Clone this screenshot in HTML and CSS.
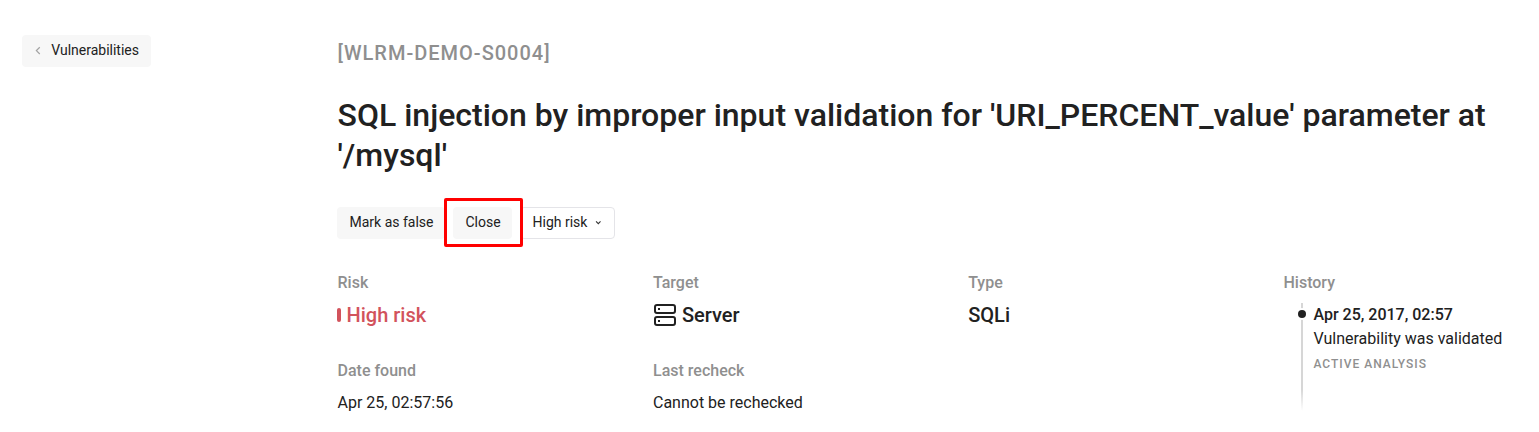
FILE: index.html
```html
<!DOCTYPE html>
<html lang="en">
<head>
<meta charset="utf-8">
<title>Vulnerability</title>
<link rel="stylesheet" href="styles.css">
</head>
<body>
<div class="page">
  <aside class="side">
    <a class="btn back"><svg width="8" height="10" viewBox="0 0 8 10"><path d="M6 2.1 2.5 5.6 6 9.1" fill="none" stroke="#a3a3a3" stroke-width="1.3"/></svg>Vulnerabilities</a>
  </aside>
  <main class="main">
    <div class="code">[WLRM-DEMO-S0004]</div>
    <h1 class="title">SQL injection by improper input validation for 'URI_PERCENT_value' parameter at '/mysql'</h1>
    <div class="actions">
      <a class="btn mark">Mark as false</a>
      <div class="close-wrap"><a class="btn close">Close</a><span class="highlight"></span></div>
      <a class="btn select">High risk<svg width="8" height="6" viewBox="0 0 8 6"><path d="M1.3 2.3 4 5l2.7-2.7" fill="none" stroke="#333" stroke-width="1.3"/></svg></a>
    </div>
    <div class="grid">
      <section class="cell"><div class="label">Risk</div><div class="value risk"><i class="bar"></i>High risk</div></section>
      <section class="cell"><div class="label">Target</div><div class="value target"><svg width="24" height="24" viewBox="0 0 24 24" fill="none" stroke="#212121" stroke-width="2"><rect x="2" y="2" width="20" height="8" rx="2"/><rect x="2" y="14" width="20" height="8" rx="2"/><path d="M5 6h2M5 18h2"/></svg>Server</div></section>
      <section class="cell"><div class="label">Type</div><div class="value">SQLi</div></section>
      <section class="cell history">
        <div class="label">History</div>
        <div class="timeline"><div class="event">Apr 25, 2017, 02:57</div><div class="desc">Vulnerability was validated</div><div class="source">ACTIVE ANALYSIS</div></div>
      </section>
      <section class="cell"><div class="label">Date found</div><div class="text">Apr 25, 02:57:56</div></section>
      <section class="cell"><div class="label">Last recheck</div><div class="text">Cannot be rechecked</div></section>
    </div>
  </main>
</div>
</body>
</html>
```
FILE: styles.css
```css
* { box-sizing: border-box; }
body { margin: 0; background: #fff; color: #212121; font-family: Roboto, sans-serif; font-size: 16px; overflow: hidden; }
.page { display: flex; height: 432px; padding-left: 22px; }
.side { width: 315px; flex: none; padding-top: 35px; }
.main { width: 1202px; flex: none; padding-top: 41px; }
.btn { display: inline-flex; align-items: center; height: 32px; padding: 0 12px 2px; border-radius: 4px; background: #f7f7f7; font-size: 14px; white-space: nowrap; }
.back { width: 129px; gap: 10px; padding-left: 11.5px; }
.code { padding-left: 0.5px; font-size: 20px; line-height: 24px; font-weight: 500; letter-spacing: 1px; color: #8f8f8f; }
.title { margin: 30px 0 0; padding-left: 0.5px; font-size: 32px; line-height: 40px; font-weight: 500; width: 1170px; }
.actions { display: flex; margin-top: 32px; height: 32px; }
.mark { width: 108px; padding-left: 12.5px; }
.close-wrap { position: relative; margin-left: 8px; width: 59px; }
.close { width: 59px; padding-left: 12.5px; }
.highlight { position: absolute; left: -9px; top: -9px; width: 79px; height: 49px; border: 3px solid #f00; border-radius: 2px; }
.select { margin-left: 8px; width: 95px; padding-left: 11.5px; background: #fff; border: 1px solid #e4e4e8; gap: 8px; }
.grid { display: grid; grid-template-columns: 315.5px 315.2px 315.3px 240px; grid-template-rows: 88px 60px; margin-top: 34px; padding-left: 0.5px; }
.label { font-weight: 500; line-height: 20px; color: #8f8f8f; }
.value { display: flex; align-items: center; height: 24px; margin-top: 10px; font-size: 20px; font-weight: 500; }
.risk { color: #d2535c; gap: 5.5px; }
.bar { width: 4px; height: 14px; margin-left: -0.5px; border-radius: 2px; background: #d2535c; }
.target { gap: 5px; }
.text { margin-top: 12px; line-height: 20px; }
.history { grid-row: span 2; }
.timeline { position: relative; margin: 10px 0 0 30px; height: 108px; }
.timeline::before { content: ""; position: absolute; left: -12.5px; top: 0; width: 2px; height: 108px; background: linear-gradient(#d6d6d6 80%, #fff); }
.timeline::after { content: ""; position: absolute; left: -15.5px; top: 7px; width: 8px; height: 8px; border-radius: 50%; background: #212121; box-shadow: 0 0 0 2px #fff; }
.event { font-weight: 500; line-height: 24px; }
.desc { line-height: 24px; white-space: nowrap; }
.source { margin-top: 5px; font-size: 12px; line-height: 16px; font-weight: 500; letter-spacing: 1px; color: #8f8f8f; }
```
